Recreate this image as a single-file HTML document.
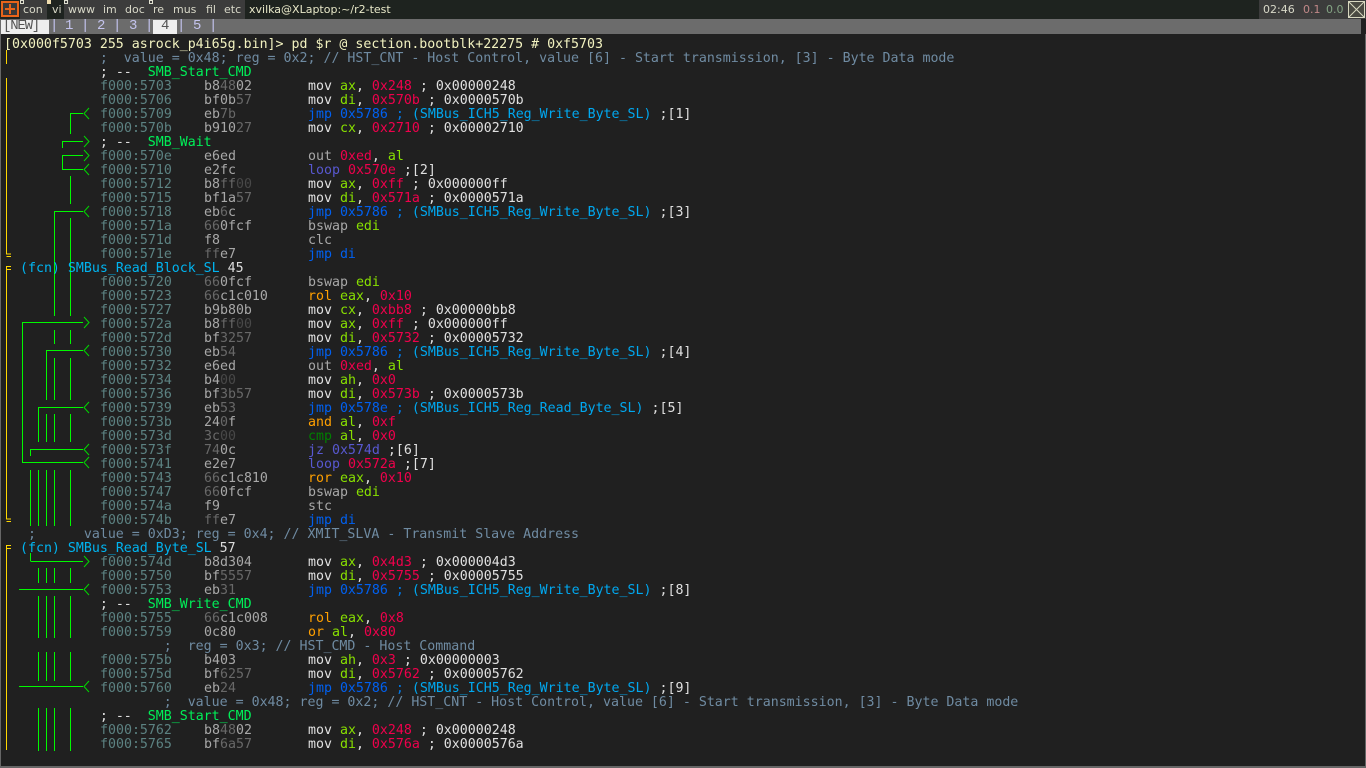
<!DOCTYPE html>
<html><head><meta charset="utf-8"><style>
html,body{margin:0;padding:0;width:1366px;height:768px;overflow:hidden;background:#202020}
#top{position:absolute;left:0;top:0;width:1366px;height:19px;background:#1e231f}
.abs{position:absolute}
.tg{position:absolute;top:3px;font:11px/14px "DejaVu Sans",sans-serif;color:#d8d8c8;white-space:pre}
.st{position:absolute;top:3px;font:11px/14px "DejaVu Sans",sans-serif;white-space:pre}
.tb{position:absolute;top:19px;font:14px/15px "Liberation Mono","DejaVu Sans Mono",monospace;letter-spacing:-1.2px;color:#c4c4ee;white-space:pre}
#term{position:absolute;left:4px;top:38px;width:1358px;font:13.28px/14px "DejaVu Sans Mono",monospace;color:#ddd}
#term div{position:relative;height:14px;white-space:pre}
i{font-style:normal}
.a,.b,.t{position:absolute;top:0}
.a{left:96px;color:#5c8282}
.b{left:200px;color:#a8a8a8}
.t{left:304px;color:#e0e0e0}
.d{color:#686868}.e{color:#484848}
.r{color:#88e000}.h{color:#f0004c}.j{color:#0060f0}.c{color:#00a8f0}.s{color:#0078e8}
.w{color:#e0e0e0}.g{color:#a8a8a8}.o{color:#ffa000}.p{color:#5858d0}.k{color:#008000}
.l{color:#00f058}.m{color:#6f8ba2}.f{color:#00b4f0}.y{color:#f2f2c0}
</style></head><body>
<div id="top"></div>
<div class="abs" style="left:20px;top:0;width:225px;height:19px;background:#3c3c3c"></div>
<div class="abs" style="left:47px;top:0;width:17px;height:19px;background:#1e231f"></div>
<div class="abs" style="left:1px;top:1px;width:14px;height:12px;border:2px solid #e8641a;background:#383838"></div>
<div class="abs" style="left:5px;top:8px;width:10px;height:2px;background:#e8641a"></div>
<div class="abs" style="left:9px;top:4px;width:2px;height:10px;background:#e8641a"></div>
<div class="abs" style="left:20px;top:0;width:2px;height:2px;border:1px solid #e0e0d0"></div>
<div class="abs" style="left:47px;top:0;width:4px;height:4px;background:#eedcae"></div>
<div class="abs" style="left:64px;top:0;width:2px;height:2px;border:1px solid #e0e0d0"></div>
<div class="abs" style="left:149px;top:0;width:2px;height:2px;border:1px solid #e0e0d0"></div>
<span class="tg" style="left:23px">con</span>
<span class="tg" style="left:52px">vi</span>
<span class="tg" style="left:68px">www</span>
<span class="tg" style="left:103px">im</span>
<span class="tg" style="left:125px">doc</span>
<span class="tg" style="left:153px">re</span>
<span class="tg" style="left:173px">mus</span>
<span class="tg" style="left:206px">fil</span>
<span class="tg" style="left:224px">etc</span>
<span class="tg" style="left:249px;color:#e8e8c8">xvilka@XLaptop:~/r2-test</span>
<div class="abs" style="left:1259px;top:0;width:107px;height:19px;background:#3c3c3c"></div>
<span class="st" style="left:1263px;color:#d8d8c8">02:46</span>
<span class="st" style="left:1303px;color:#c08888">0.1</span>
<span class="st" style="left:1326px;color:#84a484">0.0</span>
<svg class="abs" style="left:1348px;top:1px" width="17" height="17"><rect x="0" y="0" width="17" height="17" fill="#4a4a42"/><rect x=".5" y=".5" width="16" height="16" fill="none" stroke="#d8d8c0"/><path d="M1 1L16 16M16 1L1 16" stroke="#d8d8c0"/></svg>

<div class="abs" style="left:0;top:19px;width:1361px;height:15px;background:#6c6c6c"></div>
<div class="abs" style="left:1px;top:20px;width:48px;height:14px;background:#eeeeee"></div>
<div class="abs" style="left:153px;top:20px;width:24px;height:14px;background:#eeeeee"></div>
<span class="tb" style="left:3px;color:#555">[NEW]</span>
<span class="tb" style="left:50px">|</span>
<span class="tb" style="left:65px">1</span>
<span class="tb" style="left:81px">|</span>
<span class="tb" style="left:97px">2</span>
<span class="tb" style="left:113px">|</span>
<span class="tb" style="left:129px">3</span>
<span class="tb" style="left:145px">|</span>
<span class="tb" style="left:161px;color:#555">4</span>
<span class="tb" style="left:177px">|</span>
<span class="tb" style="left:193px">5</span>
<span class="tb" style="left:209px">|</span>

<div class="abs" style="left:0;top:34px;width:1px;height:734px;background:#666"></div>
<div class="abs" style="left:0;top:766px;width:1366px;height:2px;background:#666"></div>
<div class="abs" style="left:1365px;top:34px;width:1px;height:734px;background:#666"></div>

<svg class="abs" style="left:0;top:0" width="1366" height="768" shape-rendering="crispEdges" fill="none">
<g stroke="#ffd800">
<path d="M6.5 50V64M6.5 78V254H11M6.5 256.500H11M6.5 266V519H11M6.5 521.500H11M6.5 266.500H11M6.5 269.500H11M6.500 545V750M6.500 545.500H11M6.500 548.500H11"/>
</g>
<g stroke="#00f800">
<path d="M70.500 113.500H83M70.500 113V134"/>
<path d="M62.500 141.500H83M62.500 141V148"/>
<path d="M62.500 155.500H83M62.500 155V170M62.500 169.500H83"/>
<path d="M70.500 176V204"/>
<path d="M54.500 211.500H83M54.500 211V316M70.500 218V316"/>
<path d="M22.500 322.500H83M22.500 322V463M22.500 462.500H83"/>
<path d="M54.500 330V344M70.500 330V344"/>
<path d="M46.500 350.500H83M46.500 350V400M54.500 358V400M70.500 358V400"/>
<path d="M38.500 407.500H83M38.500 407V442M46.500 414V442M54.500 414V442M70.500 414V442"/>
<path d="M30.500 449.500H83M30.500 449V456"/>
<path d="M30.500 470V526M38.500 470V526M46.500 470V526M54.500 470V526M70.500 470V526"/>
<path d="M30.500 553V561M30.500 561.500H83"/>
<path d="M38.500 568V583M46.500 568V583M54.500 568V583M70.500 568V583"/>
<path d="M19 589.500H83"/>
<path d="M38.500 596V638M46.500 596V638M54.500 596V638M70.500 596V638"/>
<path d="M38.500 652V681M46.500 652V681M54.500 652V681M70.500 652V681"/>
<path d="M19 686.500H83"/>
<path d="M38.500 708V751M46.500 708V751M54.500 708V751M70.500 708V751"/>
</g>
<g stroke="#00d800" shape-rendering="auto" stroke-width="1">
<path d="M89 108L84 113.500L89 119M89 164L84 169.500L89 175M89 206L84 211.500L89 217M89 345L84 350.500L89 356M89 402L84 407.500L89 413M89 444L84 449.500L89 455M89 457L84 462.500L89 468M89 584L84 589.500L89 595M89 681L84 686.500L89 692"/>
<path d="M84 136L89 141.500L84 147M84 150L89 155.500L84 161M84 317L89 322.500L84 328M84 556L89 561.500L84 567"/>
</g>
</svg>

<div id="term">
<div class="y">[0x000f5703 255 asrock_p4i65g.bin]&gt; pd $r @ section.bootblk+22275 # 0xf5703</div>
<div class="m">            ;  value = 0x48; reg = 0x2; // HST_CNT - Host Control, value [6] - Start transmission, [3] - Byte Data mode</div>
<div>            <i class="w">; --</i>  <i class="l">SMB_Start_CMD</i></div>
<div><i class="a">f000:5703</i><i class="b">b8<i class="d">48</i>02</i><i class="t">mov <i class="r">ax</i>, <i class="h">0x248</i> ; 0x00000248</i></div>
<div><i class="a">f000:5706</i><i class="b">bf0b<i class="d">57</i></i><i class="t">mov <i class="r">di</i>, <i class="h">0x570b</i> ; 0x0000570b</i></div>
<div><i class="a">f000:5709</i><i class="b">eb<i class="d">7b</i></i><i class="t"><i class="j">jmp 0x5786</i> <i class="s">;</i> <i class="c">(SMBus_ICH5_Reg_Write_Byte_SL)</i> ;[1]</i></div>
<div><i class="a">f000:570b</i><i class="b">b910<i class="d">27</i></i><i class="t">mov <i class="r">cx</i>, <i class="h">0x2710</i> ; 0x00002710</i></div>
<div>            <i class="w">; --</i>  <i class="l">SMB_Wait</i></div>
<div><i class="a">f000:570e</i><i class="b">e6ed</i><i class="t"><i class="g">out</i> <i class="h">0xed</i>, <i class="r">al</i></i></div>
<div><i class="a">f000:5710</i><i class="b">e2fc</i><i class="t"><i class="p">loop</i> <i class="h">0x570e</i> ;[2]</i></div>
<div><i class="a">f000:5712</i><i class="b">b8<i class="d">ff</i><i class="e">00</i></i><i class="t">mov <i class="r">ax</i>, <i class="h">0xff</i> ; 0x000000ff</i></div>
<div><i class="a">f000:5715</i><i class="b">bf1a<i class="d">57</i></i><i class="t">mov <i class="r">di</i>, <i class="h">0x571a</i> ; 0x0000571a</i></div>
<div><i class="a">f000:5718</i><i class="b">eb<i class="d">6</i>c</i><i class="t"><i class="j">jmp 0x5786</i> <i class="s">;</i> <i class="c">(SMBus_ICH5_Reg_Write_Byte_SL)</i> ;[3]</i></div>
<div><i class="a">f000:571a</i><i class="b"><i class="d">66</i>0fcf</i><i class="t"><i class="g">bswap</i> <i class="r">edi</i></i></div>
<div><i class="a">f000:571d</i><i class="b">f8</i><i class="t"><i class="g">clc</i></i></div>
<div><i class="a">f000:571e</i><i class="b"><i class="d">ff</i>e7</i><i class="t"><i class="j">jmp di</i></i></div>
<div>  <i class="f">(fcn) SMBus_Read_Block_SL</i> 45</div>
<div><i class="a">f000:5720</i><i class="b"><i class="d">66</i>0fcf</i><i class="t"><i class="g">bswap</i> <i class="r">edi</i></i></div>
<div><i class="a">f000:5723</i><i class="b"><i class="d">66</i>c1c010</i><i class="t"><i class="o">rol</i> <i class="r">eax</i>, <i class="h">0x10</i></i></div>
<div><i class="a">f000:5727</i><i class="b">b9b80b</i><i class="t">mov <i class="r">cx</i>, <i class="h">0xbb8</i> ; 0x00000bb8</i></div>
<div><i class="a">f000:572a</i><i class="b">b8<i class="d">ff</i><i class="e">00</i></i><i class="t">mov <i class="r">ax</i>, <i class="h">0xff</i> ; 0x000000ff</i></div>
<div><i class="a">f000:572d</i><i class="b">bf<i class="d">3257</i></i><i class="t">mov <i class="r">di</i>, <i class="h">0x5732</i> ; 0x00005732</i></div>
<div><i class="a">f000:5730</i><i class="b">eb<i class="d">54</i></i><i class="t"><i class="j">jmp 0x5786</i> <i class="s">;</i> <i class="c">(SMBus_ICH5_Reg_Write_Byte_SL)</i> ;[4]</i></div>
<div><i class="a">f000:5732</i><i class="b">e6ed</i><i class="t"><i class="g">out</i> <i class="h">0xed</i>, <i class="r">al</i></i></div>
<div><i class="a">f000:5734</i><i class="b">b4<i class="e">00</i></i><i class="t">mov <i class="r">ah</i>, <i class="h">0x0</i></i></div>
<div><i class="a">f000:5736</i><i class="b">bf<i class="d">3b57</i></i><i class="t">mov <i class="r">di</i>, <i class="h">0x573b</i> ; 0x0000573b</i></div>
<div><i class="a">f000:5739</i><i class="b">eb<i class="d">53</i></i><i class="t"><i class="j">jmp 0x578e</i> <i class="s">;</i> <i class="c">(SMBus_ICH5_Reg_Read_Byte_SL)</i> ;[5]</i></div>
<div><i class="a">f000:573b</i><i class="b">24<i class="d">0</i>f</i><i class="t"><i class="o">and</i> <i class="r">al</i>, <i class="h">0xf</i></i></div>
<div><i class="a">f000:573d</i><i class="b"><i class="d">3c</i><i class="e">00</i></i><i class="t"><i class="k">cmp</i> <i class="r">al</i>, <i class="h">0x0</i></i></div>
<div><i class="a">f000:573f</i><i class="b"><i class="d">74</i>0c</i><i class="t"><i class="p">jz 0x574d</i> ;[6]</i></div>
<div><i class="a">f000:5741</i><i class="b">e2e7</i><i class="t"><i class="p">loop</i> <i class="h">0x572a</i> ;[7]</i></div>
<div><i class="a">f000:5743</i><i class="b"><i class="d">66</i>c1c810</i><i class="t"><i class="o">ror</i> <i class="r">eax</i>, <i class="h">0x10</i></i></div>
<div><i class="a">f000:5747</i><i class="b"><i class="d">66</i>0fcf</i><i class="t"><i class="g">bswap</i> <i class="r">edi</i></i></div>
<div><i class="a">f000:574a</i><i class="b">f9</i><i class="t"><i class="g">stc</i></i></div>
<div><i class="a">f000:574b</i><i class="b"><i class="d">ff</i>e7</i><i class="t"><i class="j">jmp di</i></i></div>
<div class="m">   ;      value = 0xD3; reg = 0x4; // XMIT_SLVA - Transmit Slave Address</div>
<div>  <i class="f">(fcn) SMBus_Read_Byte_SL</i> 57</div>
<div><i class="a">f000:574d</i><i class="b">b8d304</i><i class="t">mov <i class="r">ax</i>, <i class="h">0x4d3</i> ; 0x000004d3</i></div>
<div><i class="a">f000:5750</i><i class="b">bf<i class="d">5557</i></i><i class="t">mov <i class="r">di</i>, <i class="h">0x5755</i> ; 0x00005755</i></div>
<div><i class="a">f000:5753</i><i class="b">eb<i class="d">31</i></i><i class="t"><i class="j">jmp 0x5786</i> <i class="s">;</i> <i class="c">(SMBus_ICH5_Reg_Write_Byte_SL)</i> ;[8]</i></div>
<div>            <i class="w">; --</i>  <i class="l">SMB_Write_CMD</i></div>
<div><i class="a">f000:5755</i><i class="b"><i class="d">66</i>c1c008</i><i class="t"><i class="o">rol</i> <i class="r">eax</i>, <i class="h">0x8</i></i></div>
<div><i class="a">f000:5759</i><i class="b">0c80</i><i class="t"><i class="o">or</i> <i class="r">al</i>, <i class="h">0x80</i></i></div>
<div class="m">                    ;  reg = 0x3; // HST_CMD - Host Command</div>
<div><i class="a">f000:575b</i><i class="b">b403</i><i class="t">mov <i class="r">ah</i>, <i class="h">0x3</i> ; 0x00000003</i></div>
<div><i class="a">f000:575d</i><i class="b">bf<i class="d">6257</i></i><i class="t">mov <i class="r">di</i>, <i class="h">0x5762</i> ; 0x00005762</i></div>
<div><i class="a">f000:5760</i><i class="b">eb<i class="d">24</i></i><i class="t"><i class="j">jmp 0x5786</i> <i class="s">;</i> <i class="c">(SMBus_ICH5_Reg_Write_Byte_SL)</i> ;[9]</i></div>
<div class="m">                    ;  value = 0x48; reg = 0x2; // HST_CNT - Host Control, value [6] - Start transmission, [3] - Byte Data mode</div>
<div>            <i class="w">; --</i>  <i class="l">SMB_Start_CMD</i></div>
<div><i class="a">f000:5762</i><i class="b">b8<i class="d">48</i>02</i><i class="t">mov <i class="r">ax</i>, <i class="h">0x248</i> ; 0x00000248</i></div>
<div><i class="a">f000:5765</i><i class="b">bf<i class="d">6a57</i></i><i class="t">mov <i class="r">di</i>, <i class="h">0x576a</i> ; 0x0000576a</i></div>
</div>
</body></html>
